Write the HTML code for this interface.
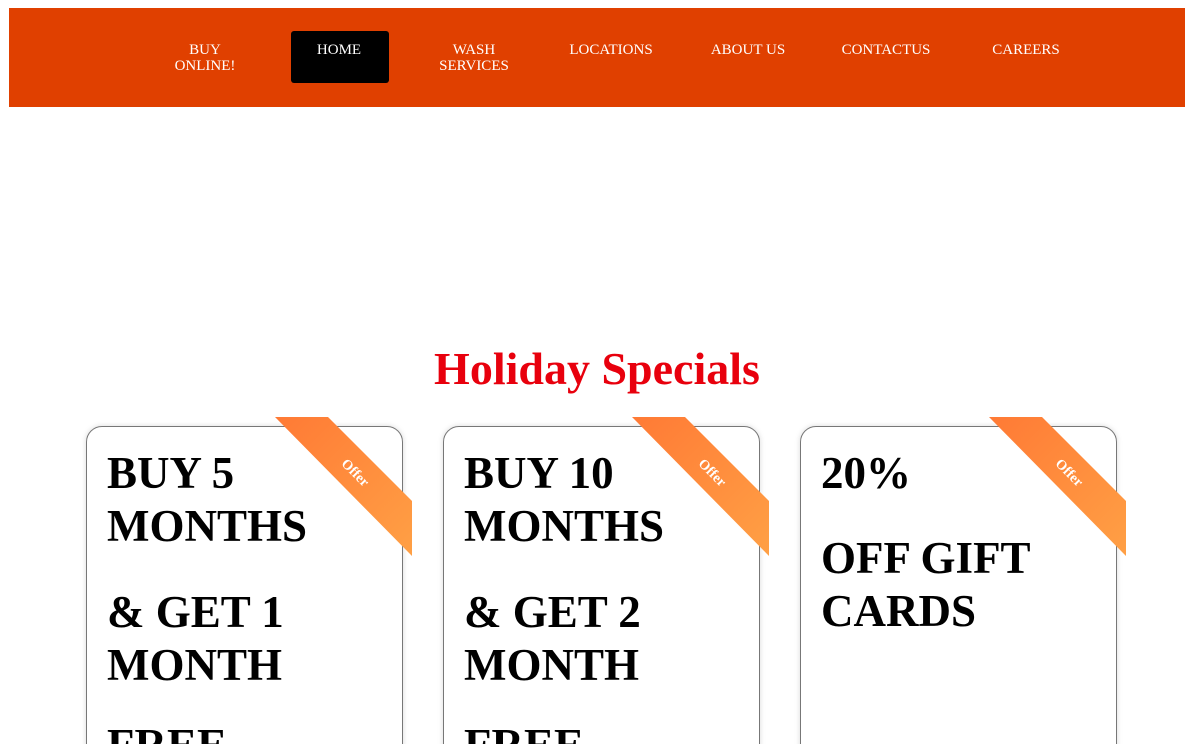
<!DOCTYPE html><html><head><style>
html,body{margin:0;width:1194px;height:744px;overflow:hidden}
body{background:#fff;font-family:"Liberation Serif",serif;position:relative}
.nav{position:absolute;left:9px;top:8px;width:1176px;height:99px;background:#e04000}
.it{position:absolute;top:34px;color:#fff;font-size:15px;line-height:16px;text-align:center;transform:translateX(-50%)}
.home{position:absolute;left:282px;top:23px;width:98px;height:52px;background:#000;border-radius:3px}
h1{position:absolute;top:343px;width:100%;text-align:center;margin:0;color:#e8000d;font-size:46px;line-height:52px}
.card{position:absolute;top:426px;width:315px;height:340px;border:1px solid #777;border-radius:16px;box-shadow:0 0 6px rgba(0,0,0,.15)}
.card div{position:absolute;left:20px;font-weight:bold;font-size:45px;line-height:53px;color:#000;white-space:nowrap}
svg{position:absolute;top:0;left:0}
</style></head><body>
<div class="nav">
<div class="home"></div>
<div class="it" style="left:196px">BUY<br>ONLINE!</div>
<div class="it" style="left:330px">HOME</div>
<div class="it" style="left:465px">WASH<br>SERVICES</div>
<div class="it" style="left:602px">LOCATIONS</div>
<div class="it" style="left:739px">ABOUT US</div>
<div class="it" style="left:877px">CONTACTUS</div>
<div class="it" style="left:1017px">CAREERS</div>
</div>
<h1>Holiday Specials</h1>
<div class="card" style="left:86px"><div style="top:20px">BUY 5<br>MONTHS</div><div style="top:159px">&amp; GET 1<br>MONTH</div><div style="top:292px">FREE</div></div>
<div class="card" style="left:443px"><div style="top:20px">BUY 10<br>MONTHS</div><div style="top:159px">&amp; GET 2<br>MONTH</div><div style="top:292px">FREE</div></div>
<div class="card" style="left:800px"><div style="top:20px">20%</div><div style="top:105px">OFF GIFT<br>CARDS</div></div>
<svg width="1194" height="744">
<defs><linearGradient id="g" x1="0" y1="0" x2="1" y2="1"><stop offset="0" stop-color="#ff7a35"/><stop offset="1" stop-color="#ffa045"/></linearGradient></defs>
<g id="r"><polygon points="275,417 328,417 412,501 412,556" fill="url(#g)"/>
<text x="355" y="477" transform="rotate(45 355 473)" text-anchor="middle" fill="#fff" font-size="14" font-weight="bold" font-family="Liberation Serif">Offer</text></g>
<use href="#r" x="357"/><use href="#r" x="714"/>
</svg>
</body></html>
